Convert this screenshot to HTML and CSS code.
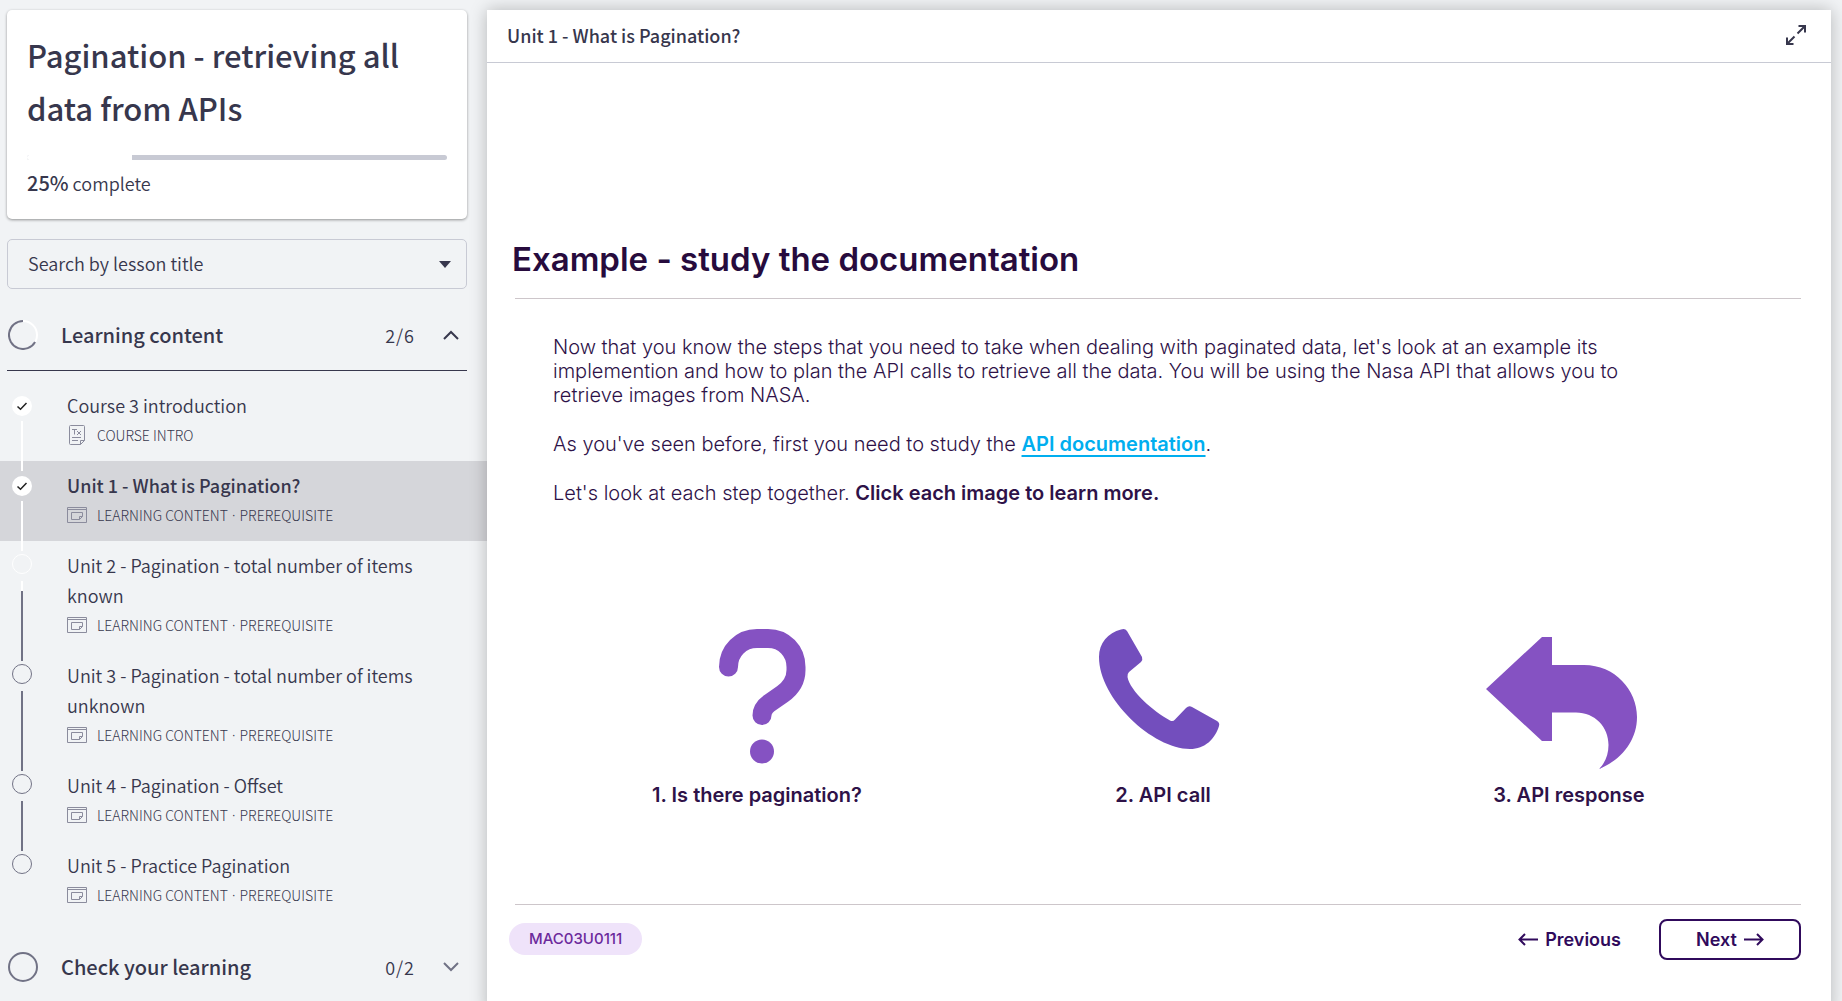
FILE: index.html
```html
<!DOCTYPE html>
<html lang="en">
<head>
<meta charset="utf-8">
<title>Unit 1 - What is Pagination?</title>
<link rel="stylesheet" href="styles.css">
</head>
<body>
<svg class="sprite" aria-hidden="true">
  <symbol id="i-window" viewBox="0 0 20 16"><g fill="none" stroke="currentColor"><path d="M.5.5h19v15H.5zM.5 2.5h19M4.500 5.500h11v4l-3 3h-8zM12.500 12.500v-3h3"/></g></symbol>
  <symbol id="i-check" viewBox="0 0 20 20"><circle cx="10" cy="10" r="10" fill="#fff"/><path d="M5.500 10.500l3 2.800 6-6.300" fill="none" stroke="#222" stroke-width="1.500"/></symbol>
</svg>
<div class="layout">
  <aside class="sidebar">
    <section class="card">
      <h1>Pagination - retrieving all data from APIs</h1>
      <div class="bar" role="progressbar" aria-label="Course progress" aria-valuenow="25"><div class="bar-done" style="width:25%"></div></div>
      <p class="complete"><b>25%</b> complete</p>
    </section>
    <div class="search">
      <select aria-label="Search by lesson title"><option>Search by lesson title</option></select>
      <svg width="12" height="7" viewBox="0 0 12 7"><path d="M0 0h12L6 7z" fill="currentColor"/></svg>
    </div>
    <button class="section open" type="button">
      <svg class="ring" viewBox="0 0 30 30"><circle cx="15" cy="15" r="14" fill="none" stroke="#fff" stroke-width="2"/><path d="M15 1A14 14 0 1 0 27.100 22" fill="none" stroke="#717285" stroke-width="2"/></svg>
      <span class="name">Learning content</span><span class="count">2/6</span>
      <svg class="chev" viewBox="0 0 16 10"><path d="M1 9l7-7 7 7" fill="none" stroke="currentColor" stroke-width="2"/></svg>
    </button>
    <ol class="lessons">
      <li class="lesson"><div class="rail"><svg class="mark"><use href="#i-check"/></svg><i class="line white"></i></div>
        <a href="#intro"><span class="title">Course 3 introduction</span><span class="meta"><svg width="20" height="20" viewBox="0 0 20 20"><g fill="none" stroke="currentColor"><path d="M2.500 1.500q0-1 1-1h13q1 0 1 1v14l-4 4h-10q-1 0-1-1zM13.500 19.500v-4h4M5 4.500h5M7.500 4.500v5M10 6l4 4M14 6l-4 4M5 12.500h9M5 15.500h6"/></g></svg>COURSE INTRO</span></a></li>
      <li class="lesson current"><div class="rail"><svg class="mark"><use href="#i-check"/></svg><i class="line white"></i></div>
        <a href="#u1" aria-current="page"><span class="title">Unit 1 - What is Pagination?</span><span class="meta"><svg width="20" height="16"><use href="#i-window"/></svg><span>LEARNING CONTENT <i class="sep">·</i> PREREQUISITE</span></span></a></li>
      <li class="lesson"><div class="rail"><i class="mark dot white"></i><i class="line part"></i></div>
        <a href="#u2"><span class="title">Unit 2 - Pagination - total number of items known</span><span class="meta"><svg width="20" height="16"><use href="#i-window"/></svg><span>LEARNING CONTENT <i class="sep">·</i> PREREQUISITE</span></span></a></li>
      <li class="lesson"><div class="rail"><i class="mark dot"></i><i class="line"></i></div>
        <a href="#u3"><span class="title">Unit 3 - Pagination - total number of items unknown</span><span class="meta"><svg width="20" height="16"><use href="#i-window"/></svg><span>LEARNING CONTENT <i class="sep">·</i> PREREQUISITE</span></span></a></li>
      <li class="lesson"><div class="rail"><i class="mark dot"></i><i class="line"></i></div>
        <a href="#u4"><span class="title">Unit 4 - Pagination - Offset</span><span class="meta"><svg width="20" height="16"><use href="#i-window"/></svg><span>LEARNING CONTENT <i class="sep">·</i> PREREQUISITE</span></span></a></li>
      <li class="lesson"><div class="rail"><i class="mark dot"></i></div>
        <a href="#u5"><span class="title">Unit 5 - Practice Pagination</span><span class="meta"><svg width="20" height="16"><use href="#i-window"/></svg><span>LEARNING CONTENT <i class="sep">·</i> PREREQUISITE</span></span></a></li>
    </ol>
    <button class="section" type="button">
      <svg class="ring" viewBox="0 0 30 30"><circle cx="15" cy="15" r="14" fill="none" stroke="#717285" stroke-width="2"/></svg>
      <span class="name">Check your learning</span><span class="count">0/2</span>
      <svg class="chev muted" viewBox="0 0 16 10"><path d="M1 1l7 7 7-7" fill="none" stroke="currentColor" stroke-width="2"/></svg>
    </button>
  </aside>
  <main class="panel">
    <header class="topbar">
      <h2>Unit 1 - What is Pagination?</h2>
      <button class="expand" type="button" aria-label="Full screen"><svg width="20" height="20" viewBox="0 0 20 20"><g fill="none" stroke="currentColor" stroke-width="2"><path d="M12.500 1H19v6.500M19 1l-7.500 7.500M1 12.500V19h6.500M1 19l7.500-7.500"/></g></svg></button>
    </header>
    <article class="slide">
      <h3>Example - study the documentation</h3>
      <div class="copy">
        <p>Now that you know the steps that you need to take when dealing with paginated data, let's look at an example its implemention and how to plan the API calls to retrieve all the data. You will be using the Nasa API that allows you to retrieve images from NASA.</p>
        <p>As you've seen before, first you need to study the <a href="#docs">API documentation</a>.</p>
        <p>Let's look at each step together. <b>Click each image to learn more.</b></p>
      </div>
      <div class="steps">
        <button type="button"><svg width="180" height="144" viewBox="0 0 180 144"><g transform="translate(52 2)"><path d="M9.500 38C9.500 22 22 9.500 38 9.500H49C65 9.500 77 22 77 38V41C77 51 72 59 63.500 65L52 73C46 77 43 82 43 86.500" fill="none" stroke="#8552c2" stroke-width="19" stroke-linecap="round"/><circle cx="43" cy="122.500" r="12" fill="#8552c2"/></g></svg>1. Is there pagination?</button>
        <button type="button"><svg width="180" height="144" viewBox="0 0 180 144"><path transform="translate(26 2)" fill="#734ebd" d="M22 .5Q26-1 28 2L43 28Q44 31 42 33L30 43Q28 45 28.500 48C31 62 54 82 71 91.500Q74 93 76 90.500L87 79Q90 76 93 78L118 92Q121 94 120 97C116 110 106 120 91 120C54 120 0 70 0 28C0 14 9 4 22 .5Z"/></svg>2. API call</button>
        <button type="button"><svg width="180" height="144" viewBox="0 0 180 144"><path transform="translate(7 10)" fill="#8552c2" d="M0 52L56 0H66V28H98C129 28 151 53 151 80C151 104 135 123 113 132C119 126 122.500 118 122.500 108C122.500 90 109 75.500 90 75.500H66V104H56Z"/></svg>3. API response</button>
      </div>
      <footer class="foot">
        <span class="code">MAC03U0111</span>
        <div class="nav">
          <button class="prev" type="button"><svg width="20" height="13" viewBox="0 0 20 13"><path d="M20 6.500H1.500M7 1L1.500 6.500 7 12" fill="none" stroke="currentColor" stroke-width="2"/></svg>Previous</button>
          <button class="next" type="button">Next<svg width="20" height="13" viewBox="0 0 20 13"><path d="M0 6.500h18.500M13 1l5.500 5.500L13 12" fill="none" stroke="currentColor" stroke-width="2"/></svg></button>
        </div>
      </footer>
    </article>
  </main>
</div>
</body>
</html>
```
FILE: styles.css
```css
* { box-sizing: border-box; }
body { margin: 0; background: #f1f3f5; color: #37374d; font-family: "Noto Sans CJK SC", "Noto Sans", sans-serif; font-size: 18px; line-height: 30px; }
h1, h2, h3, p, ol { margin: 0; padding: 0; }
button { font: inherit; color: inherit; background: none; border: 0; padding: 0; text-align: left; cursor: pointer; }
svg { flex: none; }
.sprite { position: absolute; width: 0; height: 0; }

.layout { display: grid; grid-template-columns: 487px 1fr; min-height: 100vh; padding: 10px 11px 0 0; }

.card { margin: 0 20px 20px 7px; padding: 18px 20px; background: #fff; border-radius: 5px; box-shadow: 0 1px 3px rgba(0, 0, 0, .4); }
.card h1 { font-size: 31px; line-height: 53px; font-weight: 500; }
.bar { height: 5px; margin: 21px 0 8px; border-radius: 3px; background: #c8cad4; overflow: hidden; }
.bar-done { height: 100%; background: #fff; }
.complete { margin-bottom: 3px; }
.complete b { font-weight: 500; font-size: 20px; }
.complete, .search, .title, .count { font-weight: 350; }

.search { display: flex; align-items: center; margin: 0 20px 0 7px; height: 50px; border: 1px solid #c8cad4; border-radius: 5px; padding-right: 15px; }
.search select { flex: 1; appearance: none; border: 0; background: none; height: 100%; padding: 0 0 3px 20px; font: inherit; color: inherit; }

.section { display: flex; align-items: center; width: calc(100% - 27px); height: 92px; margin-left: 7px; padding: 0 8px 0 1px; }
.section.open { height: 82px; padding-top: 10px; border-bottom: 1px solid #37374d; }
.ring { width: 30px; height: 30px; margin-right: 23px; }
.name { flex: 1; font-size: 20px; font-weight: 500; }
.count { letter-spacing: 1px; margin-right: 28px; }
.chev { width: 16px; height: 10px; }
.muted { color: #717285; }

.lessons { list-style: none; padding-top: 10px; }
.lesson { display: flex; }
.current { background: #d5d6da; }
.rail { display: flex; flex-direction: column; align-items: center; width: 20px; margin-left: 12px; padding-top: 13px; color: #717285; }
.mark { width: 20px; height: 20px; margin: 2px 0 5px; flex: none; }
.dot { border: 1px solid; border-radius: 50%; margin: 0 0 7px; }
.white { color: #fff; }
.line { flex: 1; width: 2px; margin-bottom: -10px; background: currentColor; z-index: 1; }
.part { background: linear-gradient(#fff 10px, #717285 10px); }
.lesson a { flex: 1; display: flex; flex-direction: column; padding: 9px 60px 11px 35px; color: inherit; text-decoration: none; }
.current .title { font-weight: 500; }
.meta { display: flex; align-items: center; gap: 10px; font-size: 14px; line-height: 30px; font-weight: 300; }
.meta svg { color: #8b8c9d; }
.sep { margin: 0 1px; font-family: "Noto Sans", sans-serif; font-style: normal; line-height: 1; }

.panel { background: #fff; box-shadow: 0 0 16px rgba(0, 0, 0, .25); z-index: 2; }
.topbar { display: flex; justify-content: space-between; align-items: center; height: 53px; padding: 0 25px 2px 20px; border-bottom: 1px solid #c8cad4; }
.topbar h2 { font-size: 18px; font-weight: 500; }
.expand { display: flex; }

.slide { padding: 168px 30px 40px 28px; font-family: Inter, sans-serif; color: #2e1248; }
.slide h3 { font-size: 33px; line-height: 56px; font-weight: 600; color: #270b3d; padding: 0 0 11px; margin-bottom: 36px; border-bottom: 1px solid #cdc6ca; text-indent: -3px; }
.copy { display: flex; flex-direction: column; gap: 25px; max-width: 1160px; padding-left: 38px; font-size: 20px; line-height: 24px; font-weight: 300; }
.copy b { font-weight: 600; }
.copy a { font-weight: 600; color: #00aeef; text-underline-offset: 4px; }
.steps { display: grid; grid-template-columns: repeat(3, 1fr); margin: 122px 29px 97px 39px; }
.steps button { display: flex; flex-direction: column; align-items: center; gap: 12px; font-size: 20px; line-height: 24px; font-weight: 600; }
.foot { display: flex; align-items: flex-start; justify-content: space-between; border-top: 1px solid #cdc6ca; padding-top: 14px; }
.code { margin: 4px 0 0 -6px; padding: 0 20px; border-radius: 16px; background: #efe3fa; color: #6c2a9c; font-size: 15px; line-height: 32px; font-weight: 500; }
.nav { display: flex; gap: 38px; font-size: 18px; font-weight: 600; color: #300a5c; }
.nav button { display: flex; align-items: center; gap: 7px; height: 41px; }
.nav .next { justify-content: center; width: 142px; border: 2px solid #300a5c; border-radius: 8px; }
```
